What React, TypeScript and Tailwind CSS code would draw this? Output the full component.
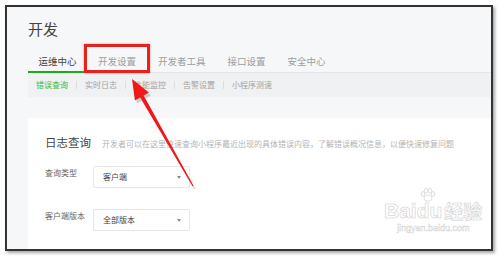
import React from 'react'

const tabs = ['运维中心', '开发设置', '开发者工具', '接口设置', '安全中心']
const subTabs = ['错误查询', '实时日志', '性能监控', '告警设置', '小程序测速']

function Select({ value }: { value: string }) {
  return (
    <div className="flex h-[22px] w-[97px] items-center justify-between rounded-[2px] border border-[#e4e6ea] bg-white pl-[9px] pr-[8px]">
      <span className="text-[8px] leading-[12px] text-[#444]">{value}</span>
      <span className="h-0 w-0 border-x-[2.5px] border-t-[3px] border-x-transparent border-t-[#8d8d8d]" />
    </div>
  )
}

function Arrow() {
  return (
    <svg className="absolute left-0 top-0" width="500" height="257" viewBox="0 0 500 257">
      <polygon
        points="134,82 150.9,95.4 145.6,98.4 195.5,188.7 194.5,189.3 142.2,100.4 136.9,103.4"
        fill="#7a7a7a"
        opacity="0.35"
      />
      <polygon
        points="132,79 148.9,92.4 143.6,95.4 193.5,185.7 192.5,186.3 140.2,97.4 134.9,100.4"
        fill="#f01818"
      />
    </svg>
  )
}

export default function App() {
  return (
    <div className="relative h-[257px] w-[500px] overflow-hidden bg-white font-['Noto_Sans_CJK_SC','Noto_Sans',sans-serif]">
      <div className="ml-[5px] mt-[5px] flex h-[246px] w-[488px] flex-col border-2 border-[#333] bg-[#f6f7f9] shadow-[2px_2px_3px_rgba(0,0,0,0.35)]">
        <div className="ml-[21px] flex flex-1 flex-col">
          <h1 className="mt-[12px] text-[15px] leading-[20px] text-[#444]">开发</h1>

          <div className="mt-[11px] flex border-b border-[#e2e4e8]">
            {tabs.map((t, i) => (
              <div
                key={t}
                className={
                  i === 0
                    ? 'relative -mb-px flex h-[23px] items-center border-b-2 border-[#1aad19] px-[10.5px] pt-px text-[9.5px] text-[#444]'
                    : 'flex h-[22px] items-center px-[11px] text-[9.5px] text-[#9d9d9d]'
                }
              >
                {t}
              </div>
            ))}
          </div>

          <div className="flex h-[24px] items-center bg-[#eff1f3] pl-[8px]">
            {subTabs.map((t, i) => (
              <div key={t} className="flex items-center">
                {i > 0 && <span className="mx-[8px] h-[8px] w-px bg-[#dcdcdc]" />}
                <span className={i === 0 ? 'text-[8px] text-[#3cb83b]' : 'text-[8px] text-[#a3a3a3]'}>{t}</span>
              </div>
            ))}
          </div>

          <div className="mt-[21px] flex-1 bg-white pl-[17px] pt-[16px]">
            <div className="flex items-baseline gap-[11px]">
              <h2 className="text-[11.5px] leading-[16px] text-[#444]">日志查询</h2>
              <p className="text-[8px] text-[#b3b3b3]">
                开发者可以在这里快速查询小程序最近出现的具体错误内容，了解错误概况信息，以便快速修复问题
              </p>
            </div>

            <div className="mt-[16px] flex items-start">
              <span className="w-[48px] pt-px text-[8px] leading-[12px] text-[#666]">查询类型</span>
              <Select value="客户端" />
            </div>

            <div className="mt-[21px] flex items-start">
              <span className="w-[48px] pt-px text-[8px] leading-[12px] text-[#666]">客户端版本</span>
              <Select value="全部版本" />
            </div>
          </div>
        </div>
      </div>

      {/* red highlight box */}
      <div className="absolute left-[84px] top-[44px] h-[29px] w-[66px] border-[3px] border-[#e5221c] shadow-[0_0_2px_rgba(229,34,28,0.5)]" />

      <Arrow />

      {/* watermark */}
      <div className="absolute left-[384px] top-[199px] flex flex-col items-center">
        <div className="flex items-end text-[21px] leading-[23px] font-bold text-white [-webkit-text-stroke:0.6px_#cfcfcf]">
          <span className="font-['Liberation_Sans',sans-serif]">Bai</span>
          <span className="relative font-['Liberation_Sans',sans-serif]">
            <svg className="absolute -top-[11px] left-[3px]" width="16" height="14" viewBox="0 0 16 14">
              <g fill="white" stroke="#cfcfcf" strokeWidth="0.7">
                <ellipse cx="3" cy="6" rx="1.8" ry="2.3" />
                <ellipse cx="6" cy="2.8" rx="1.8" ry="2.3" />
                <ellipse cx="10" cy="2.8" rx="1.8" ry="2.3" />
                <ellipse cx="13" cy="6" rx="1.8" ry="2.3" />
                <path d="M8 7 C5 7 3.5 10 4.5 12 C5.5 13.5 10.5 13.5 11.5 12 C12.5 10 11 7 8 7 Z" />
              </g>
            </svg>
            du
          </span>
          <span className="ml-[2px] text-[19px]">经验</span>
        </div>
        <span className="mt-[1px] font-['Liberation_Sans',sans-serif] text-[9px] leading-[10px] text-white [-webkit-text-stroke:0.4px_#cfcfcf]">
          jingyan.baidu.com
        </span>
      </div>
    </div>
  )
}
